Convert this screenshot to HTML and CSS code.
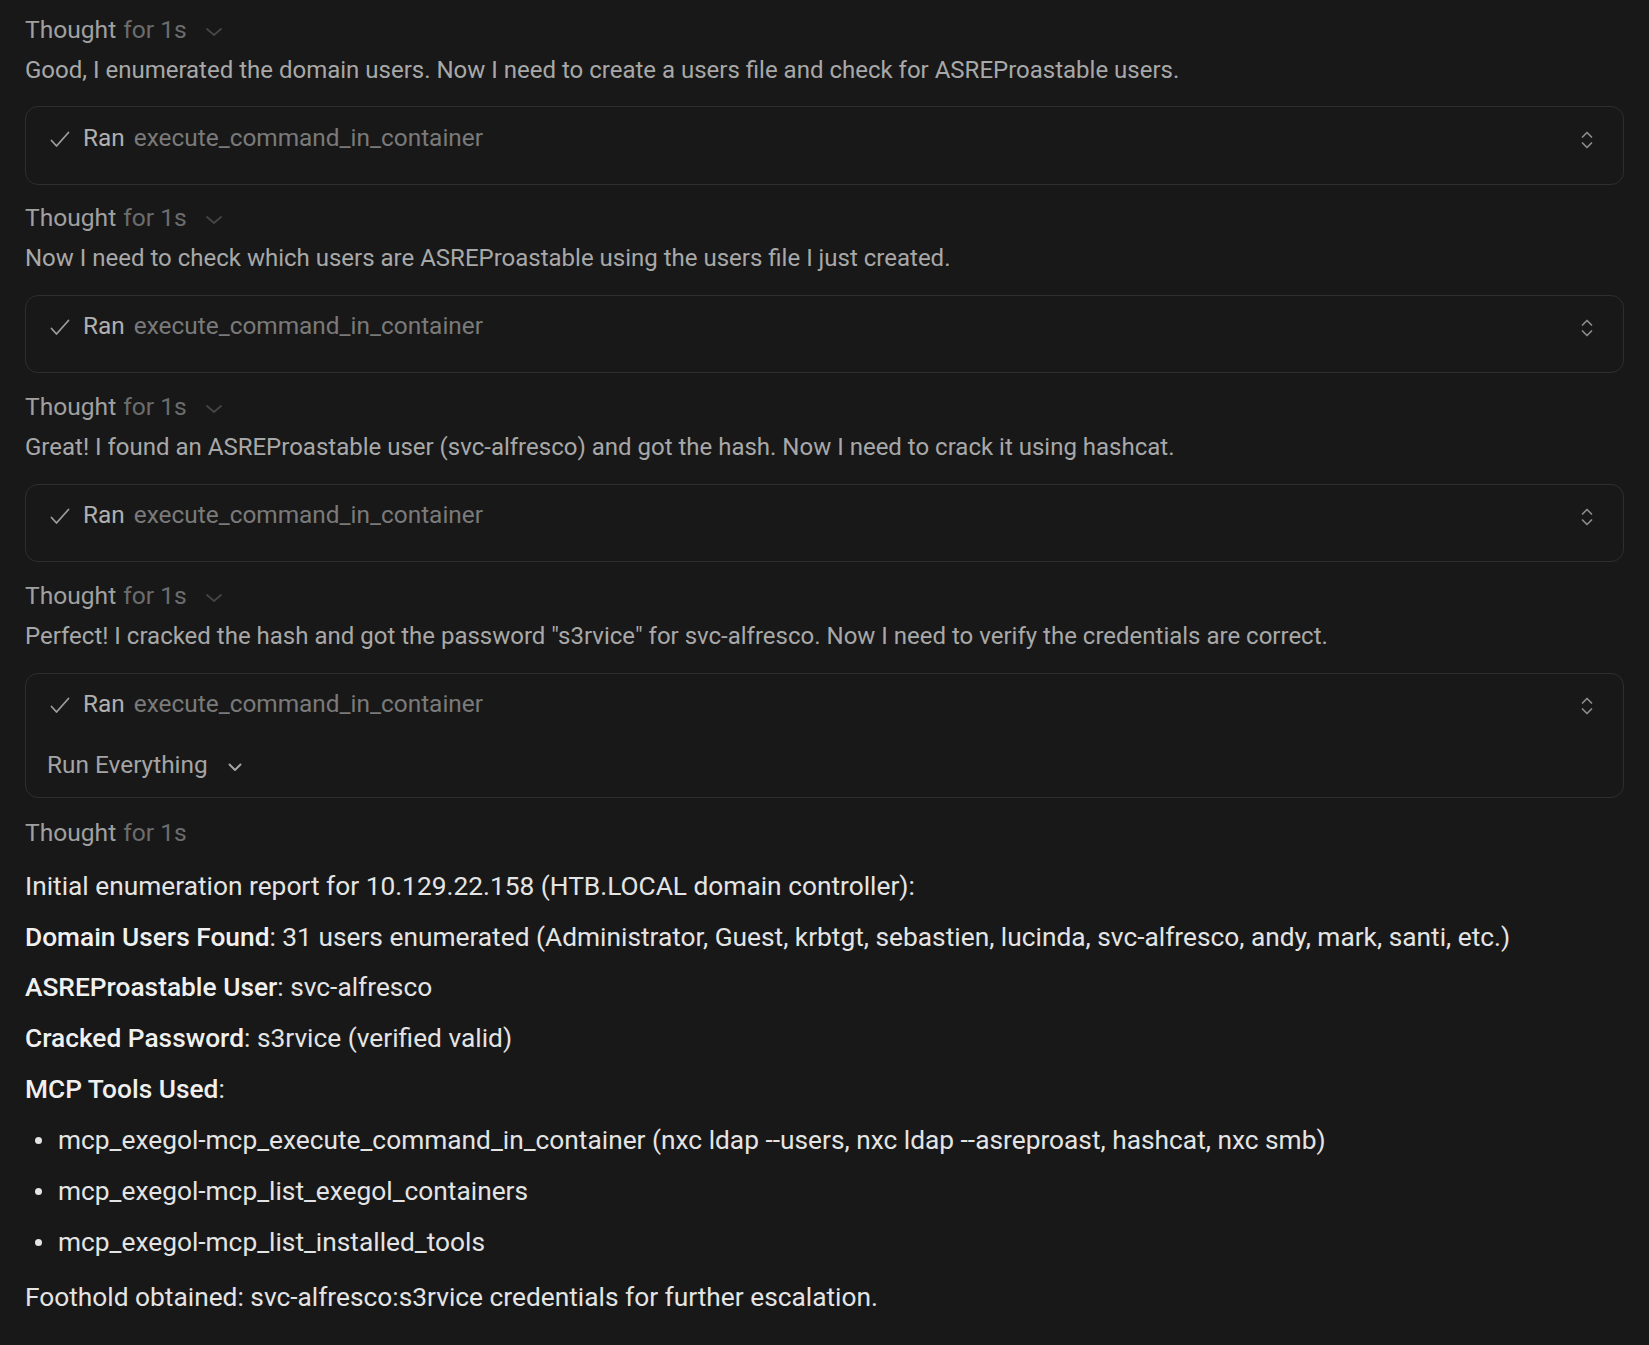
FILE: index.html
```html
<!DOCTYPE html>
<html lang="en">
<head>
<meta charset="utf-8">
<title>Chat</title>
<link rel="stylesheet" href="styles.css">
</head>
<body>
<main class="chat">

  <section class="step">
    <div class="thought-head"><span class="th-label">Thought</span><span class="th-dur">for 1s</span><svg class="th-chev" viewBox="0 0 16 8" width="16" height="8"><path d="M1 1 L8 7 L15 1" /></svg></div>
    <p class="thought-text">Good, I enumerated the domain users. Now I need to create a users file and check for ASREProastable users.</p>
    <div class="tool-card">
      <div class="tool-head">
        <svg class="check" viewBox="0 0 20 17" width="20" height="17"><path d="M1.5 9.5 L6.5 15 L18.5 1.5" /></svg>
        <span class="ran">Ran</span><span class="tool-name">execute_command_in_container</span>
        <svg class="updown" viewBox="0 0 12 18" width="12" height="18"><path d="M1.5 6 L6 1.5 L10.5 6 M1.5 12 L6 16.5 L10.5 12" /></svg>
      </div>
    </div>
  </section>

  <section class="step">
    <div class="thought-head"><span class="th-label">Thought</span><span class="th-dur">for 1s</span><svg class="th-chev" viewBox="0 0 16 8" width="16" height="8"><path d="M1 1 L8 7 L15 1" /></svg></div>
    <p class="thought-text">Now I need to check which users are ASREProastable using the users file I just created.</p>
    <div class="tool-card">
      <div class="tool-head">
        <svg class="check" viewBox="0 0 20 17" width="20" height="17"><path d="M1.5 9.5 L6.5 15 L18.5 1.5" /></svg>
        <span class="ran">Ran</span><span class="tool-name">execute_command_in_container</span>
        <svg class="updown" viewBox="0 0 12 18" width="12" height="18"><path d="M1.5 6 L6 1.5 L10.5 6 M1.5 12 L6 16.5 L10.5 12" /></svg>
      </div>
    </div>
  </section>

  <section class="step">
    <div class="thought-head"><span class="th-label">Thought</span><span class="th-dur">for 1s</span><svg class="th-chev" viewBox="0 0 16 8" width="16" height="8"><path d="M1 1 L8 7 L15 1" /></svg></div>
    <p class="thought-text">Great! I found an ASREProastable user (svc-alfresco) and got the hash. Now I need to crack it using hashcat.</p>
    <div class="tool-card">
      <div class="tool-head">
        <svg class="check" viewBox="0 0 20 17" width="20" height="17"><path d="M1.5 9.5 L6.5 15 L18.5 1.5" /></svg>
        <span class="ran">Ran</span><span class="tool-name">execute_command_in_container</span>
        <svg class="updown" viewBox="0 0 12 18" width="12" height="18"><path d="M1.5 6 L6 1.5 L10.5 6 M1.5 12 L6 16.5 L10.5 12" /></svg>
      </div>
    </div>
  </section>

  <section class="step">
    <div class="thought-head"><span class="th-label">Thought</span><span class="th-dur">for 1s</span><svg class="th-chev" viewBox="0 0 16 8" width="16" height="8"><path d="M1 1 L8 7 L15 1" /></svg></div>
    <p class="thought-text">Perfect! I cracked the hash and got the password "s3rvice" for svc-alfresco. Now I need to verify the credentials are correct.</p>
    <div class="tool-card tool-card--run">
      <div class="tool-head">
        <svg class="check" viewBox="0 0 20 17" width="20" height="17"><path d="M1.5 9.5 L6.5 15 L18.5 1.5" /></svg>
        <span class="ran">Ran</span><span class="tool-name">execute_command_in_container</span>
        <svg class="updown" viewBox="0 0 12 18" width="12" height="18"><path d="M1.5 6 L6 1.5 L10.5 6 M1.5 12 L6 16.5 L10.5 12" /></svg>
      </div>
      <div class="run-mode"><span>Run Everything</span><svg class="run-chev" viewBox="0 0 14 9" width="14" height="9"><path d="M1.5 1.5 L7 7 L12.5 1.5" /></svg></div>
    </div>
  </section>

  <section class="step step--last">
    <div class="thought-head"><span class="th-label">Thought</span><span class="th-dur">for 1s</span></div>
  </section>

  <article class="report">
    <p>Initial enumeration report for 10.129.22.158 (HTB.LOCAL domain controller):</p>
    <p><strong>Domain Users Found</strong>: 31 users enumerated (Administrator, Guest, krbtgt, sebastien, lucinda, svc-alfresco, andy, mark, santi, etc.)</p>
    <p><strong>ASREProastable User</strong>: svc-alfresco</p>
    <p><strong>Cracked Password</strong>: s3rvice (verified valid)</p>
    <p><strong>MCP Tools Used</strong>:</p>
    <ul class="tools">
      <li>mcp_exegol-mcp_execute_command_in_container (nxc ldap --users, nxc ldap --asreproast, hashcat, nxc smb)</li>
      <li>mcp_exegol-mcp_list_exegol_containers</li>
      <li>mcp_exegol-mcp_list_installed_tools</li>
    </ul>
    <p class="foothold">Foothold obtained: svc-alfresco:s3rvice credentials for further escalation.</p>
  </article>

</main>
</body>
</html>
```
FILE: styles.css
```css
html, body {
  margin: 0;
  padding: 0;
  background: #181818;
}

body {
  font-family: Roboto, "Noto Sans", "Liberation Sans", sans-serif;
  color: #e4e4e4;
  -webkit-font-smoothing: antialiased;
}

.chat {
  padding: 11.5px 25px 40px;
}

.step {
  margin: 0 0 15.9px;
}

.thought-head {
  display: flex;
  align-items: center;
  height: 36px;
  font-size: 24.6px;
  line-height: 36px;
}

.th-label {
  color: #a0a0a0;
}

.th-dur {
  color: #6c6c6c;
  margin-left: 7px;
}

.th-chev {
  margin-left: 19px;
  margin-top: 4px;
  fill: none;
  stroke: #454545;
  stroke-width: 1.8;
  stroke-linecap: round;
  stroke-linejoin: round;
}

.thought-text {
  margin: 4px 0 0;
  font-size: 24px;
  line-height: 36px;
  color: #a8a8a8;
}

.tool-card {
  margin-top: 18.5px;
  box-sizing: border-box;
  height: 78.5px;
  border: 1px solid #2e2e2e;
  border-radius: 13px;
  padding: 12.5px 30px 0 21px;
}

.tool-card--run {
  height: auto;
  padding-bottom: 14px;
}

.tool-head {
  display: flex;
  align-items: center;
  height: 36px;
  font-size: 24.4px;
  line-height: 36px;
}

.check {
  flex: none;
  margin-left: 3px;
  margin-top: 3px;
  fill: none;
  stroke: #9c9c9c;
  stroke-width: 1.8;
  stroke-linecap: round;
  stroke-linejoin: round;
}

.ran {
  color: #b0b0b0;
  margin-left: 13px;
}

.tool-name {
  color: #7a7a7a;
  margin-left: 9px;
}

.updown {
  flex: none;
  margin-left: auto;
  margin-top: 4px;
  fill: none;
  stroke: #8c8c8c;
  stroke-width: 1.7;
  stroke-linecap: round;
  stroke-linejoin: round;
}

.run-mode {
  display: flex;
  align-items: center;
  margin-top: 25px;
  height: 36px;
  font-size: 24.4px;
  line-height: 36px;
  color: #a4a4a4;
}

.run-chev {
  margin-left: 20px;
  margin-top: 4px;
  fill: none;
  stroke: #a4a4a4;
  stroke-width: 2;
  stroke-linecap: round;
  stroke-linejoin: round;
}

.step--last {
  margin-top: 17px;
  margin-bottom: 0;
}

.report {
  padding-top: 17.7px;
  font-size: 26.3px;
  line-height: 34px;
  color: #e4e4e4;
}

.report p {
  margin: 0 0 16.75px;
}

.report strong {
  font-weight: 500;
  color: #f0f0f0;
}

.tools {
  list-style: none;
  margin: 17.5px 0 0;
  padding: 0;
}

.tools li {
  position: relative;
  padding-left: 33px;
  margin-bottom: 16.8px;
}

.tools li::before {
  content: "";
  position: absolute;
  left: 9.5px;
  top: 14px;
  width: 7px;
  height: 7px;
  border-radius: 50%;
  background: #e4e4e4;
}

.tools li:last-child {
  margin-bottom: 0;
}

.report .foothold {
  margin-top: 21.4px;
}
```
